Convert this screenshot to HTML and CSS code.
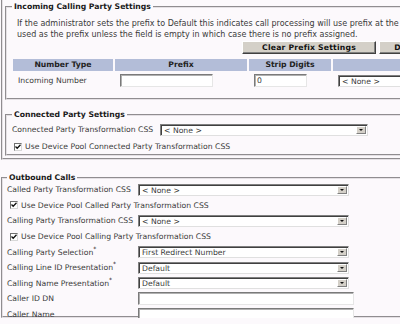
FILE: index.html
```html
<!DOCTYPE html>
<html lang="en">
<head>
    <meta charset="UTF-8">
    <title>Calling Party Settings</title>
    <link rel="stylesheet" href="styles.css">
</head>
<body>

<div class="page">
    <fieldset class="outer">
        <fieldset class="group incoming">
            <legend>Incoming Calling Party Settings</legend>
            <p class="note">If the administrator sets the prefix to Default this indicates call processing will use prefix at the next level setting (DevicePool/Service Parameter). Otherwise, the value configured is<br>used as the prefix unless the field is empty in which case there is no prefix assigned.</p>
            <div class="actions">
                <button class="btn">Clear Prefix Settings</button>
                <button class="btn">Default Prefix Settings</button>
            </div>
            <div class="prefix-table">
                <div class="th">Number Type</div>
                <div class="th">Prefix</div>
                <div class="th">Strip Digits</div>
                <div class="th">Calling Search Space</div>
                <div class="td">Incoming Number</div>
                <div class="td"><span class="input w-prefix"></span></div>
                <div class="td"><span class="input w-strip">0</span></div>
                <div class="td"><span class="select w-css"><span class="value">&lt; None &gt;</span><span class="arrow"></span></span></div>
            </div>
        </fieldset>

        <fieldset class="group connected">
            <legend>Connected Party Settings</legend>
            <div class="row">
                <span class="label wide">Connected Party Transformation CSS</span>
                <span class="select w-conn"><span class="value">&lt; None &gt;</span><span class="arrow"></span></span>
            </div>
            <div class="check"><span class="box"><svg width="6" height="6" viewBox="0 0 6 6"><path d="M0.5 2.5 L2.2 4.3 L5.5 0.8" fill="none" stroke="#111" stroke-width="1.3"/></svg></span>Use Device Pool Connected Party Transformation CSS</div>
        </fieldset>
    </fieldset>

    <fieldset class="group outbound">
        <legend>Outbound Calls</legend>
        <div class="form">
            <div class="row">
                <span class="label">Called Party Transformation CSS</span>
                <span class="select w-out"><span class="value">&lt; None &gt;</span><span class="arrow"></span></span>
            </div>
            <div class="check"><span class="box"><svg width="6" height="6" viewBox="0 0 6 6"><path d="M0.5 2.5 L2.2 4.3 L5.5 0.8" fill="none" stroke="#111" stroke-width="1.3"/></svg></span>Use Device Pool Called Party Transformation CSS</div>
            <div class="row">
                <span class="label">Calling Party Transformation CSS</span>
                <span class="select w-out"><span class="value">&lt; None &gt;</span><span class="arrow"></span></span>
            </div>
            <div class="check"><span class="box"><svg width="6" height="6" viewBox="0 0 6 6"><path d="M0.5 2.5 L2.2 4.3 L5.5 0.8" fill="none" stroke="#111" stroke-width="1.3"/></svg></span>Use Device Pool Calling Party Transformation CSS</div>
            <div class="row">
                <span class="label">Calling Party Selection<sup>*</sup></span>
                <span class="select w-out"><span class="value">First Redirect Number</span><span class="arrow"></span></span>
            </div>
            <div class="row">
                <span class="label">Calling Line ID Presentation<sup>*</sup></span>
                <span class="select w-out"><span class="value">Default</span><span class="arrow"></span></span>
            </div>
            <div class="row">
                <span class="label">Calling Name Presentation<sup>*</sup></span>
                <span class="select w-out"><span class="value">Default</span><span class="arrow"></span></span>
            </div>
            <div class="row">
                <span class="label">Caller ID DN</span>
                <span class="input w-text"></span>
            </div>
            <div class="row">
                <span class="label">Caller Name</span>
                <span class="input w-text"></span>
            </div>
        </div>
    </fieldset>
</div>

</body>
</html>
```

FILE: styles.css
```css
html, body {
    margin: 0;
    padding: 0;
    overflow: hidden;
}
body {
    background-color: #fcf9fc;
    font-family: "DejaVu Sans", Verdana, sans-serif;
    font-size: 7.7px;
    color: #3a3a3a;
}
.page {
    width: 470px;
}
fieldset {
    margin: 0;
    min-width: 0;
    border: 2px groove #e4e0e4;
}
legend {
    padding: 0 2px;
    font-weight: bold;
    color: #1a1a1a;
    line-height: 9px;
}
.outer {
    border-top: none;
    margin-left: 1px;
    padding: 0 0 2px 2px;
}
.group {
    padding: 0 0 0 5px;
}
.incoming {
    margin-top: 2px;
    height: 94px;
}
.connected {
    margin-top: 10px;
    height: 42px;
}
.outbound {
    margin: 13px 0 0 1px;
    padding-left: 4px;
    height: 141px;
}
.note {
    margin: 7px 0 0 5px;
    font-size: 8px;
    line-height: 11px;
    white-space: nowrap;
}
.actions {
    display: flex;
    gap: 3px;
    margin: 1px 0 0 230px;
}
.btn {
    flex: none;
    font-family: inherit;
    font-size: 7.7px;
    font-weight: bold;
    color: #111;
    background-color: #d4d0c8;
    border: 1px solid;
    border-color: #fff #404040 #404040 #fff;
    box-shadow: inset -1px -1px #808080;
    height: 13px;
    width: 134px;
    padding: 0;
    letter-spacing: 0.2px;
}
.prefix-table {
    display: grid;
    grid-template-columns: 100px 132px 82px 250px;
    grid-template-rows: 12px 13px;
    gap: 3px 2px;
    margin: 5px 0 0 1px;
}
.th {
    background-color: #b3bdd8;
    font-weight: bold;
    color: #222;
    text-align: center;
    line-height: 12px;
}
.td {
    padding-left: 5px;
    line-height: 13px;
    display: flex;
    align-items: center;
}
.input {
    display: inline-block;
    box-sizing: border-box;
    height: 13px;
    background-color: #fff;
    border: 1px solid;
    border-color: #7a7a7a #e6e6e6 #e6e6e6 #7a7a7a;
    box-shadow: inset 1px 1px #b0b0b0;
    padding-left: 2px;
    line-height: 11px;
}
.w-prefix { width: 93px; }
.w-strip { width: 53px; }
.w-text { width: 216px; }
.select {
    display: inline-flex;
    box-sizing: border-box;
    height: 12px;
    background-color: #fff;
    border: 1px solid;
    border-color: #808080 #e0e0e0 #e0e0e0 #808080;
    box-shadow: inset 1px 1px #404040;
    padding: 1px 1px 1px 2px;
}
.select .value {
    flex: 1;
    line-height: 10px;
    padding-left: 1px;
    white-space: nowrap;
}
.select .arrow {
    width: 8px;
    border: 1px solid;
    border-color: #fff #808080 #808080 #fff;
    background-color: #d4d0c8;
    display: flex;
    align-items: center;
    justify-content: center;
}
.select .arrow::after {
    content: "";
    border-left: 2px solid transparent;
    border-right: 2px solid transparent;
    border-top: 2px solid #111;
}
.w-css { width: 200px; }
.w-conn { width: 208px; }
.w-out { width: 211px; }
.row {
    display: flex;
    align-items: center;
    height: 15.75px;
}
.outbound .row,
.outbound .check {
    height: 15.6px;
}
.label {
    width: 131px;
    flex: none;
    white-space: nowrap;
}
.label.wide {
    width: 148px;
}
.label sup {
    font-size: 6px;
    line-height: 0;
    color: #111;
}
.connected .row {
    margin-top: 3px;
}
.check {
    display: flex;
    align-items: center;
    height: 15.75px;
    white-space: nowrap;
}
.connected .check {
    margin: 1px 0 0 2px;
}
.outbound .check {
    margin-left: 3px;
}
.box {
    display: inline-flex;
    align-items: center;
    justify-content: center;
    box-sizing: border-box;
    width: 8px;
    height: 8px;
    margin-right: 3px;
    background-color: #fff;
    border: 1px solid;
    border-color: #707070 #d8d8d8 #d8d8d8 #707070;
}
```
